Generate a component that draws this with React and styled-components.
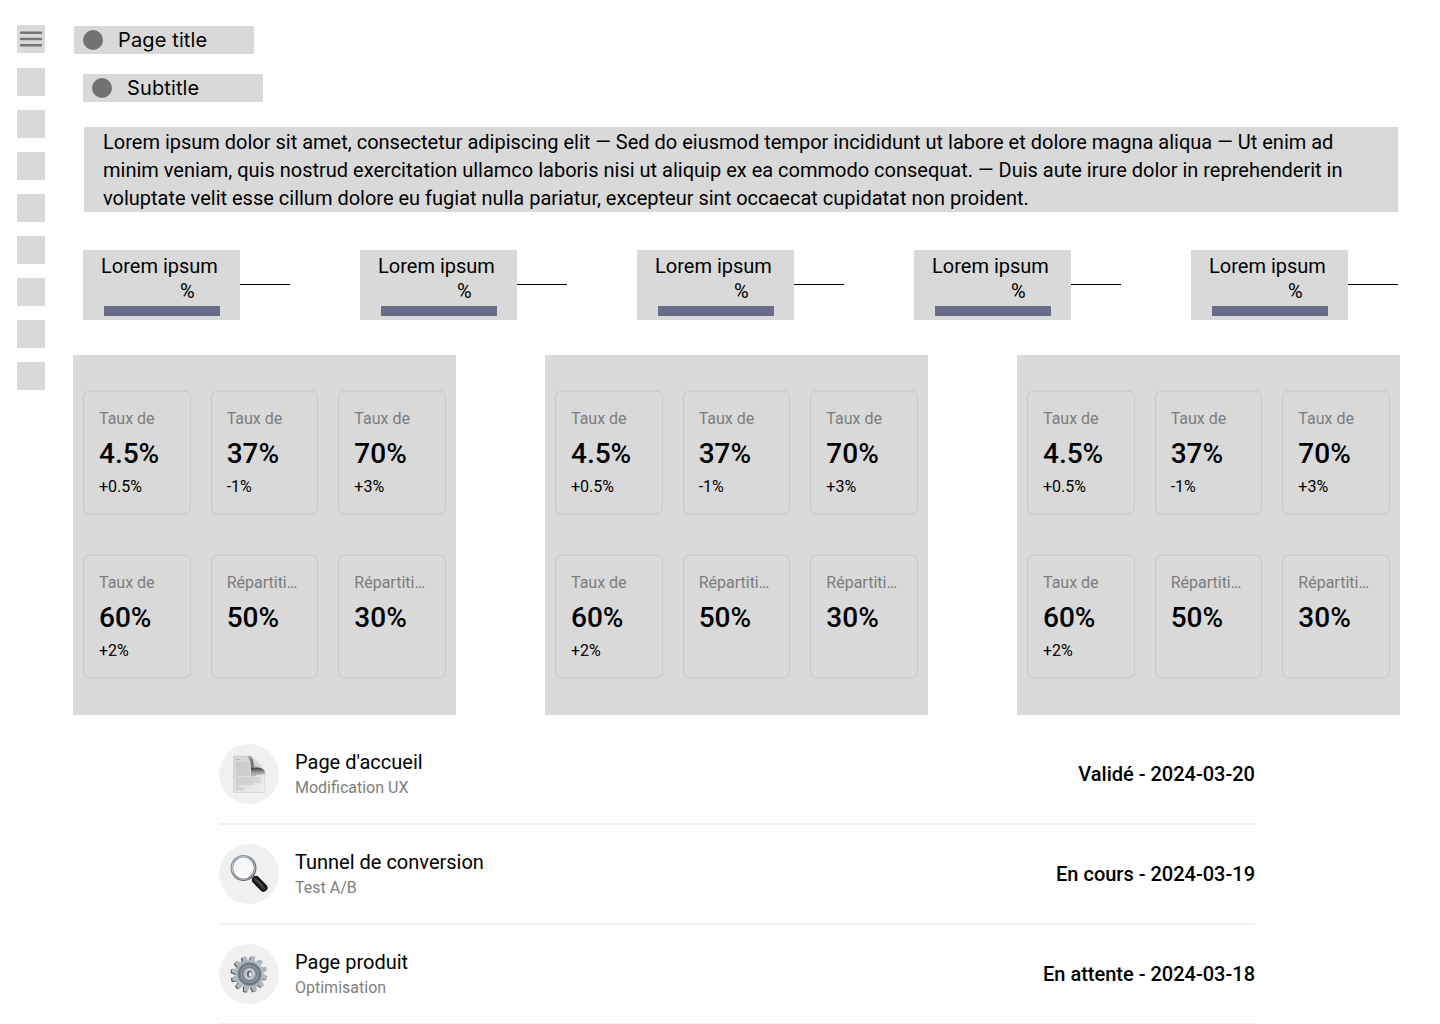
import React from "react";
import styled, { createGlobalStyle } from "styled-components";

const Global = createGlobalStyle`
  * { box-sizing: border-box; }
  body { margin: 0; background: #fff; overflow: hidden; }
`;

const Page = styled.div`
  display: flex;
  align-items: flex-start;
  width: 1440px;
  height: 1024px;
  overflow: hidden;
  font-family: Roboto, "Liberation Sans", sans-serif;
  color: #000;
`;

const Sidebar = styled.nav`
  display: flex;
  flex-direction: column;
  flex: none;
  gap: 14px;
  width: 73px;
  padding: 25px 0 0 17px;
`;

const MenuButton = styled.div`
  width: 28px;
  height: 28px;
  margin-bottom: 1px;
  background: #d9d9d9;
  svg { display: block; }
`;

const NavItem = styled.div`
  width: 28px;
  height: 28px;
  background: #d9d9d9;
`;

const Main = styled.main`
  flex: none;
  width: 1327px;
  padding-top: 26px;
`;

const Heading = styled.h1`
  display: flex;
  align-items: center;
  gap: 15px;
  width: 180px;
  height: 28px;
  margin: 0 0 20px ${(p) => p.$indent}px;
  padding-left: 9px;
  background: #d9d9d9;
  font: 400 20px/28px Inter, sans-serif;
  letter-spacing: 0.13px;
`;

const Dot = styled.span`
  width: 20px;
  height: 20px;
  border-radius: 50%;
  background: #737270;
`;

const Intro = styled.p`
  height: 85px;
  margin: 25px 2px 0 11px;
  padding: 1px 0 0 19px;
  background: #d9d9d9;
  font-size: 20px;
  line-height: 28px;
  white-space: nowrap;
`;

const Steps = styled.div`
  display: flex;
  gap: 70px;
  margin: 38px 0 0 10px;
`;

const Step = styled.div`
  display: flex;
  align-items: flex-start;
`;

const StepBox = styled.div`
  width: 157px;
  height: 70px;
  background: #d9d9d9;
`;

const StepLabel = styled.div`
  padding: 2px 0 0 18px;
  font-size: 20px;
  line-height: 28px;
`;

const StepPercent = styled.div`
  padding-left: 97px;
  font-size: 20px;
  line-height: 22px;
`;

const StepBar = styled.div`
  width: 116px;
  height: 10px;
  margin: 4px 0 0 21px;
  background: #696d88;
`;

const Connector = styled.div`
  width: 50px;
  height: 1px;
  margin-top: 34px;
  background: #000;
`;

const Panels = styled.div`
  display: flex;
  justify-content: space-between;
  margin-top: 35px;
`;

const Panel = styled.section`
  display: grid;
  grid-template-columns: repeat(3, 1fr);
  grid-auto-rows: 125px;
  gap: 39px 20px;
  width: 383px;
  height: 360px;
  padding: 35px 10px;
  background: #d9d9d9;
`;

const Card = styled.div`
  min-width: 0;
  padding: 15px;
  border: solid;
  border-width: 2px 1px;
  border-color: #cecece #c8c8c8;
  border-radius: 7px;
`;

const CardLabel = styled.div`
  color: #7d7d7d;
  font-size: 16px;
  line-height: 23px;
  white-space: nowrap;
`;

const CardValue = styled.div`
  margin-top: 6px;
  font-size: 28px;
  font-weight: 500;
  line-height: 36px;
`;

const CardDelta = styled.div`
  margin-top: 3px;
  font-size: 16px;
  line-height: 24px;
`;

const List = styled.div`
  width: 1036px;
  margin: 10px 0 0 146px;
`;

const Row = styled.div`
  display: flex;
  align-items: center;
  height: 100px;
  border-bottom: 2px solid #f0f0f0;
`;

const Avatar = styled.div`
  flex: none;
  width: 60px;
  height: 60px;
  margin-right: 16px;
  border-radius: 50%;
  background: #f0f0f0;
  svg { display: block; }
`;

const RowText = styled.div`
  flex: 1;
`;

const RowTitle = styled.div`
  font-size: 20px;
  line-height: 28px;
`;

const RowNote = styled.div`
  color: #808080;
  font-size: 16px;
  line-height: 24px;
`;

const RowStatus = styled.div`
  font-size: 20px;
  font-weight: 500;
  line-height: 28px;
`;

const MenuIcon = () => (
  <svg width="28" height="28" viewBox="0 0 28 28">
    <path d="M4 7.7h20M4 14h20M4 20.2h20" stroke="#777674" strokeWidth="2.4" strokeLinecap="round" />
  </svg>
);

const PageIcon = () => (
  <svg width="60" height="60" viewBox="0 0 60 60">
    <defs>
      <linearGradient id="paper" x1="0" y1="0" x2="1" y2="1">
        <stop offset="0" stopColor="#d2d2d2" />
        <stop offset="1" stopColor="#efefef" />
      </linearGradient>
      <linearGradient id="fold" x1="0.75" y1="0.2" x2="0.2" y2="0.9">
        <stop offset="0.1" stopColor="#ebebeb" />
        <stop offset="0.6" stopColor="#d0d0d0" />
        <stop offset="1" stopColor="#8a8a8a" />
      </linearGradient>
      <linearGradient id="shade" x1="0" y1="0" x2="1" y2="0">
        <stop offset="0" stopColor="#666" stopOpacity="0" />
        <stop offset="1" stopColor="#484848" />
      </linearGradient>
      <linearGradient id="under" x1="0" y1="0" x2="0" y2="1">
        <stop offset="0.1" stopColor="#484848" />
        <stop offset="1" stopColor="#888" stopOpacity="0" />
      </linearGradient>
    </defs>
    <path d="M14.5 12H31L45.700 27v21.500H14.500z" fill="url(#paper)" stroke="#cfcfcf" strokeWidth=".7" />
    <path d="M17 15.500h4" stroke="#aaa" strokeWidth=".8" />
    <path d="M17 19h13M17 21h14M17 23h14M17 25h14M17 27h14M17 29h15M17 31h20M17 34h25M17 36h23M17 38h25M17 40h18M17 43h3M17 45h8" stroke="#bcbcbc" strokeWidth=".9" />
    <path d="M27 12h4c3.500 1 4.500 6 4 13l-3 2c0-7-1-12-5-15z" fill="url(#shade)" />
    <path d="M32 24c6-1.500 13-1 13.700 4v2c-3 1-8 0-13.700 4z" fill="url(#under)" />
    <path d="M31 12c4 1 12 8 14.700 15-3-3.500-6-4.500-11.500-3.200C35 18 34 14 31 12z" fill="url(#fold)" />
  </svg>
);

const SearchIcon = () => (
  <svg width="60" height="60" viewBox="0 0 60 60">
    <defs>
      <linearGradient id="rim" x1="0" y1="0" x2="1" y2="1">
        <stop offset="0" stopColor="#8b9bb0" />
        <stop offset=".5" stopColor="#777d84" />
        <stop offset="1" stopColor="#55595f" />
      </linearGradient>
      <linearGradient id="grip" x1="0" y1="1" x2="1" y2="0">
        <stop offset="0.2" stopColor="#0c0c0d" />
        <stop offset=".5" stopColor="#3c3f43" />
        <stop offset=".7" stopColor="#151617" />
      </linearGradient>
    </defs>
    <path d="M33 32l4 4" stroke="#888" strokeWidth="3" />
    <circle cx="24.500" cy="24" r="11.700" fill="#f7f7f7" stroke="url(#rim)" strokeWidth="2.600" />
    <circle cx="24.500" cy="24" r="11.500" fill="none" stroke="#d6dce3" strokeWidth=".8" />
    <path d="M16 27c2 6 9 9 15 4" fill="none" stroke="#fff" strokeWidth="1.500" />
    <path d="M37 36l7.500 7.700" stroke="#141516" strokeWidth="8" strokeLinecap="round" />
    <path d="M37 36l7.500 7.700" stroke="url(#grip)" strokeWidth="5.500" strokeLinecap="round" />
    <path d="M38 36l6 6.200" stroke="#63676c" strokeWidth="1" strokeLinecap="round" />
  </svg>
);

const TEETH = [0, 30, 60, 90, 120, 150, 180, 210, 240, 270, 300, 330];

const GearIcon = () => (
  <svg width="60" height="60" viewBox="0 0 60 60">
    <defs>
      <linearGradient id="steel" x1="0" y1="0" x2="1" y2="1">
        <stop offset="0" stopColor="#a0aab4" />
        <stop offset=".5" stopColor="#bcc3ca" />
        <stop offset="1" stopColor="#a2abb4" />
      </linearGradient>
    </defs>
    <g transform="translate(29.400 30.700)" fill="#5c5751">
      {TEETH.map((a) => (
        <path key={a} d="M-3-12L-2-18H1.800L3-12z" transform={`rotate(${a + 12})`} />
      ))}
    </g>
    <g transform="translate(30.500 30)" fill="#aeb7c0">
      {TEETH.map((a) => (
        <path key={a} d="M-3-12L-1.900-18H1.800L3-12z" transform={`rotate(${a + 12})`} />
      ))}
      <circle r="14" fill="url(#steel)" />
      <circle r="11.800" fill="#727c86" />
      <circle r="9.800" fill="#8d969f" stroke="#67717b" strokeWidth=".8" />
      <circle r="7.800" fill="#77818b" />
      <circle r="6" fill="#bdc5cd" />
      <ellipse rx="2.500" ry="3.200" fill="#665f57" />
      <ellipse cx=".8" cy=".4" rx="1.500" ry="2.400" fill="#e9e5de" />
    </g>
  </svg>
);

const INTRO = [
  "Lorem ipsum dolor sit amet, consectetur adipiscing elit — Sed do eiusmod tempor incididunt ut labore et dolore magna aliqua — Ut enim ad",
  "minim veniam, quis nostrud exercitation ullamco laboris nisi ut aliquip ex ea commodo consequat. — Duis aute irure dolor in reprehenderit in",
  "voluptate velit esse cillum dolore eu fugiat nulla pariatur, excepteur sint occaecat cupidatat non proident.",
];

const METRICS = [
  ["Taux de", "4.5%", "+0.5%"],
  ["Taux de", "37%", "-1%"],
  ["Taux de", "70%", "+3%"],
  ["Taux de", "60%", "+2%"],
  ["Répartiti…", "50%", ""],
  ["Répartiti…", "30%", ""],
];

const ROWS = [
  [PageIcon, "Page d'accueil", "Modification UX", "Validé - 2024-03-20"],
  [SearchIcon, "Tunnel de conversion", "Test A/B", "En cours - 2024-03-19"],
  [GearIcon, "Page produit", "Optimisation", "En attente - 2024-03-18"],
];

export default function App() {
  return (
    <Page>
      <Global />
      <Sidebar>
        <MenuButton><MenuIcon /></MenuButton>
        {Array.from({ length: 8 }, (_, i) => <NavItem key={i} />)}
      </Sidebar>
      <Main>
        <Heading $indent={1}><Dot />Page title</Heading>
        <Heading as="h2" $indent={10}><Dot />Subtitle</Heading>
        <Intro>
          {INTRO.map((line) => <React.Fragment key={line}>{line}<br /></React.Fragment>)}
        </Intro>
        <Steps>
          {[0, 1, 2, 3, 4].map((i) => (
            <Step key={i}>
              <StepBox>
                <StepLabel>Lorem ipsum</StepLabel>
                <StepPercent>%</StepPercent>
                <StepBar />
              </StepBox>
              <Connector />
            </Step>
          ))}
        </Steps>
        <Panels>
          {[0, 1, 2].map((p) => (
            <Panel key={p}>
              {METRICS.map(([label, value, delta], i) => (
                <Card key={i}>
                  <CardLabel>{label}</CardLabel>
                  <CardValue>{value}</CardValue>
                  <CardDelta>{delta}</CardDelta>
                </Card>
              ))}
            </Panel>
          ))}
        </Panels>
        <List>
          {ROWS.map(([Icon, title, note, status]) => (
            <Row key={title}>
              <Avatar><Icon /></Avatar>
              <RowText>
                <RowTitle>{title}</RowTitle>
                <RowNote>{note}</RowNote>
              </RowText>
              <RowStatus>{status}</RowStatus>
            </Row>
          ))}
        </List>
      </Main>
    </Page>
  );
}
